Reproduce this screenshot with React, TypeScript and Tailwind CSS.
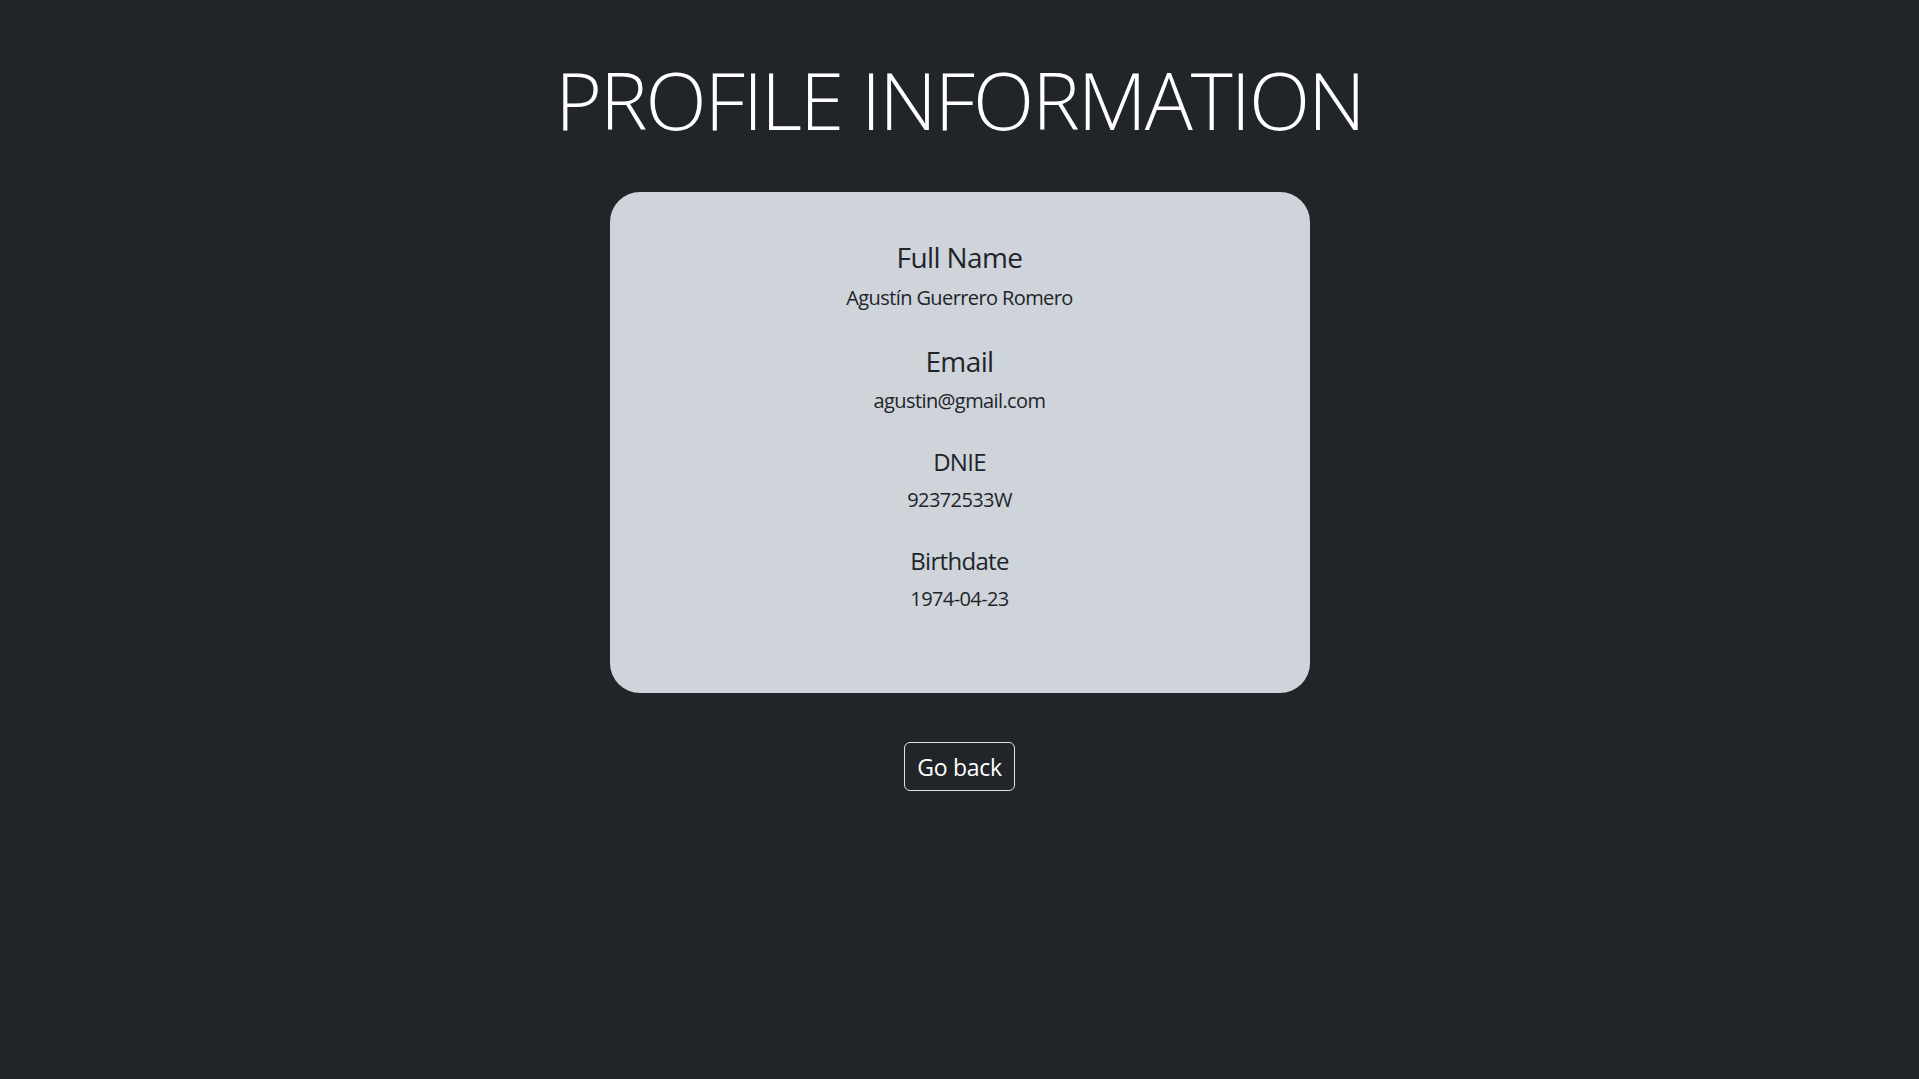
const fields = [
  { label: "Full Name", value: "Agustín Guerrero Romero", big: true },
  { label: "Email", value: "agustin@gmail.com", big: true },
  { label: "DNIE", value: "92372533W", big: false },
  { label: "Birthdate", value: "1974-04-23", big: false },
];

export default function App() {
  return (
    <div
      className="min-h-screen bg-[#212529] flex flex-col items-center text-[#212529]"
      style={{ fontFamily: '"Open Sans", "Noto Sans", sans-serif' }}
    >
      <h1 className="mt-[51px] text-[80px] leading-[1.2] font-light tracking-[-2px] text-white">
        PROFILE INFORMATION
      </h1>

      <div className="mt-[45px] w-[700px] h-[501px] rounded-[30px] bg-[#ced4da] pt-[49px] flex flex-col items-center gap-8">
        {fields.map((f) => (
          <div key={f.label} className="flex flex-col items-center gap-2">
            <h3
              className={
                f.big
                  ? "text-[28px] leading-[1.2] tracking-[-0.6px]"
                  : "text-[24px] leading-[1.2] tracking-[-0.7px]"
              }
            >
              {f.label}
            </h3>
            <p className="text-[20px] leading-[1.5] tracking-[-0.6px]">{f.value}</p>
          </div>
        ))}
      </div>

      <button className="mt-[49px] h-[49px] px-3 pt-[1px] rounded-[6px] border border-[#dee2e6] text-white text-[23px] leading-[1.5] tracking-[-0.3px]">
        Go back
      </button>
    </div>
  );
}
